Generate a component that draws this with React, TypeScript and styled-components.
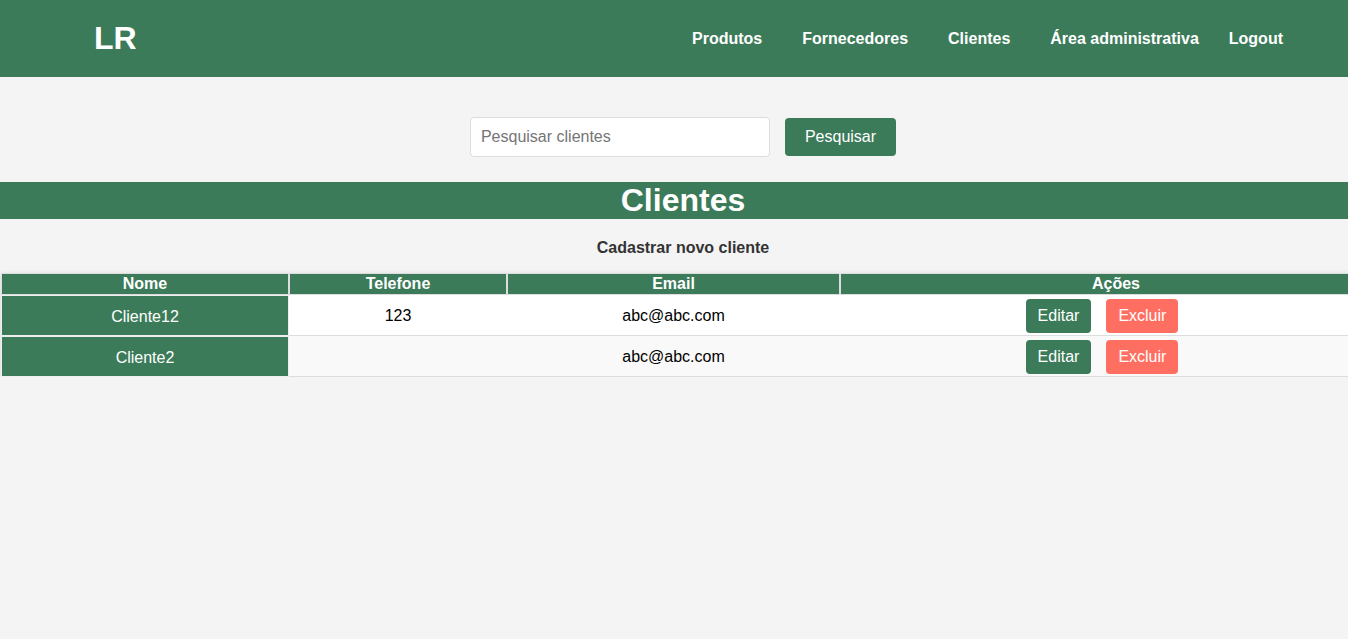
import React from 'react'
import styled, { createGlobalStyle } from 'styled-components'

const green = '#3b7b59'

const GlobalStyle = createGlobalStyle`
  * {
    box-sizing: border-box;
  }
  body {
    margin: 0;
    background: #f4f4f4;
    font-family: "Liberation Sans", Arial, sans-serif;
    overflow-x: hidden;
  }
`

const Page = styled.div`
  width: 1366px;
`

const Header = styled.header`
  display: flex;
  justify-content: space-between;
  align-items: center;
  height: 77px;
  padding: 0 83px 0 94px;
  background: ${green};
`

const Logo = styled.div`
  color: #fff;
  font-size: 32px;
  font-weight: bold;
`

const Nav = styled.nav`
  display: flex;
  align-items: center;
`

const NavLink = styled('a')<{ $gap: number }>`
  margin-left: ${({ $gap }) => $gap}px;
  color: #fff;
  font-size: 16px;
  font-weight: bold;
  text-decoration: none;
  cursor: pointer;
`

const SearchForm = styled.form`
  display: flex;
  justify-content: center;
  align-items: center;
  gap: 15px;
  padding-top: 40px;
`

const SearchInput = styled.input`
  width: 300px;
  height: 40px;
  padding: 10px;
  border: 1px solid #ddd;
  border-radius: 4px;
  background: #fff;
  font-family: inherit;
  font-size: 16px;

  &::placeholder {
    color: #757575;
  }
`

const Button = styled('button')<{ $color: string, $pad: string }>`
  padding: ${({ $pad }) => $pad};
  border: none;
  border-radius: 4px;
  background: ${({ $color }) => $color};
  color: #fff;
  font-family: inherit;
  font-size: 16px;
  line-height: 18px;
  cursor: pointer;
`

const Title = styled.h2`
  margin: 25px 0 0;
  background: ${green};
  color: #fff;
  text-align: center;
  font-size: 32px;
  font-weight: bold;
  line-height: 37px;
`

const NewRow = styled.div`
  margin: 20px 0 16px;
  text-align: center;
`

const NewLink = styled.a`
  color: #333;
  font-size: 16px;
  font-weight: bold;
  line-height: 18px;
  cursor: pointer;
`

const Table = styled.table`
  width: 1391px;
  margin-left: 1px;
  table-layout: fixed;
  border-collapse: separate;
  border-spacing: 0;
  box-shadow: 0 1px 5px rgba(0, 0, 0, 0.12);
`

const Th = styled('th')<{ $w: number }>`
  width: ${({ $w }) => $w}px;
  padding: 1px 0;
  border: 1px solid #ddd;
  background: ${green};
  color: #fff;
  font-size: 16px;
  font-weight: bold;
  line-height: 18px;
`

const Tr = styled('tr')<{ $alt: boolean }>`
  background: ${({ $alt }) => ($alt ? '#f9f9f9' : '#fff')};
`

const Td = styled.td`
  padding: 4px 0 2px;
  border-bottom: 1px solid #ddd;
  color: #000;
  font-size: 16px;
  text-align: center;
`

const NameTd = styled(Td)`
  border: 1px solid #eee;
  background: ${green};
  color: #fff;
`

const Actions = styled.div`
  display: flex;
  justify-content: center;
  gap: 15px;
  padding-right: 28px;
`

const clients = [
  { name: 'Cliente12', phone: '123', email: 'abc@abc.com' },
  { name: 'Cliente2', phone: '', email: 'abc@abc.com' },
]

export default function App() {
  return (
    <Page>
      <GlobalStyle />
      <Header>
        <Logo>LR</Logo>
        <Nav>
          <NavLink $gap={0}>Produtos</NavLink>
          <NavLink $gap={40}>Fornecedores</NavLink>
          <NavLink $gap={40}>Clientes</NavLink>
          <NavLink $gap={40}>Área administrativa</NavLink>
          <NavLink $gap={30}>Logout</NavLink>
        </Nav>
      </Header>

      <SearchForm onSubmit={(e) => e.preventDefault()}>
        <SearchInput placeholder="Pesquisar clientes" />
        <Button $color={green} $pad="10px 20px">Pesquisar</Button>
      </SearchForm>

      <Title>Clientes</Title>

      <NewRow>
        <NewLink>Cadastrar novo cliente</NewLink>
      </NewRow>

      <Table>
        <thead>
          <tr>
            <Th $w={288}>Nome</Th>
            <Th $w={218}>Telefone</Th>
            <Th $w={333}>Email</Th>
            <Th $w={552}>Ações</Th>
          </tr>
        </thead>
        <tbody>
          {clients.map((client, index) => (
            <Tr key={client.name} $alt={index % 2 === 1}>
              <NameTd>{client.name}</NameTd>
              <Td>{client.phone}</Td>
              <Td>{client.email}</Td>
              <Td>
                <Actions>
                  <Button $color={green} $pad="8px 12px">Editar</Button>
                  <Button $color="#ff6f61" $pad="8px 12px">Excluir</Button>
                </Actions>
              </Td>
            </Tr>
          ))}
        </tbody>
      </Table>
    </Page>
  )
}
